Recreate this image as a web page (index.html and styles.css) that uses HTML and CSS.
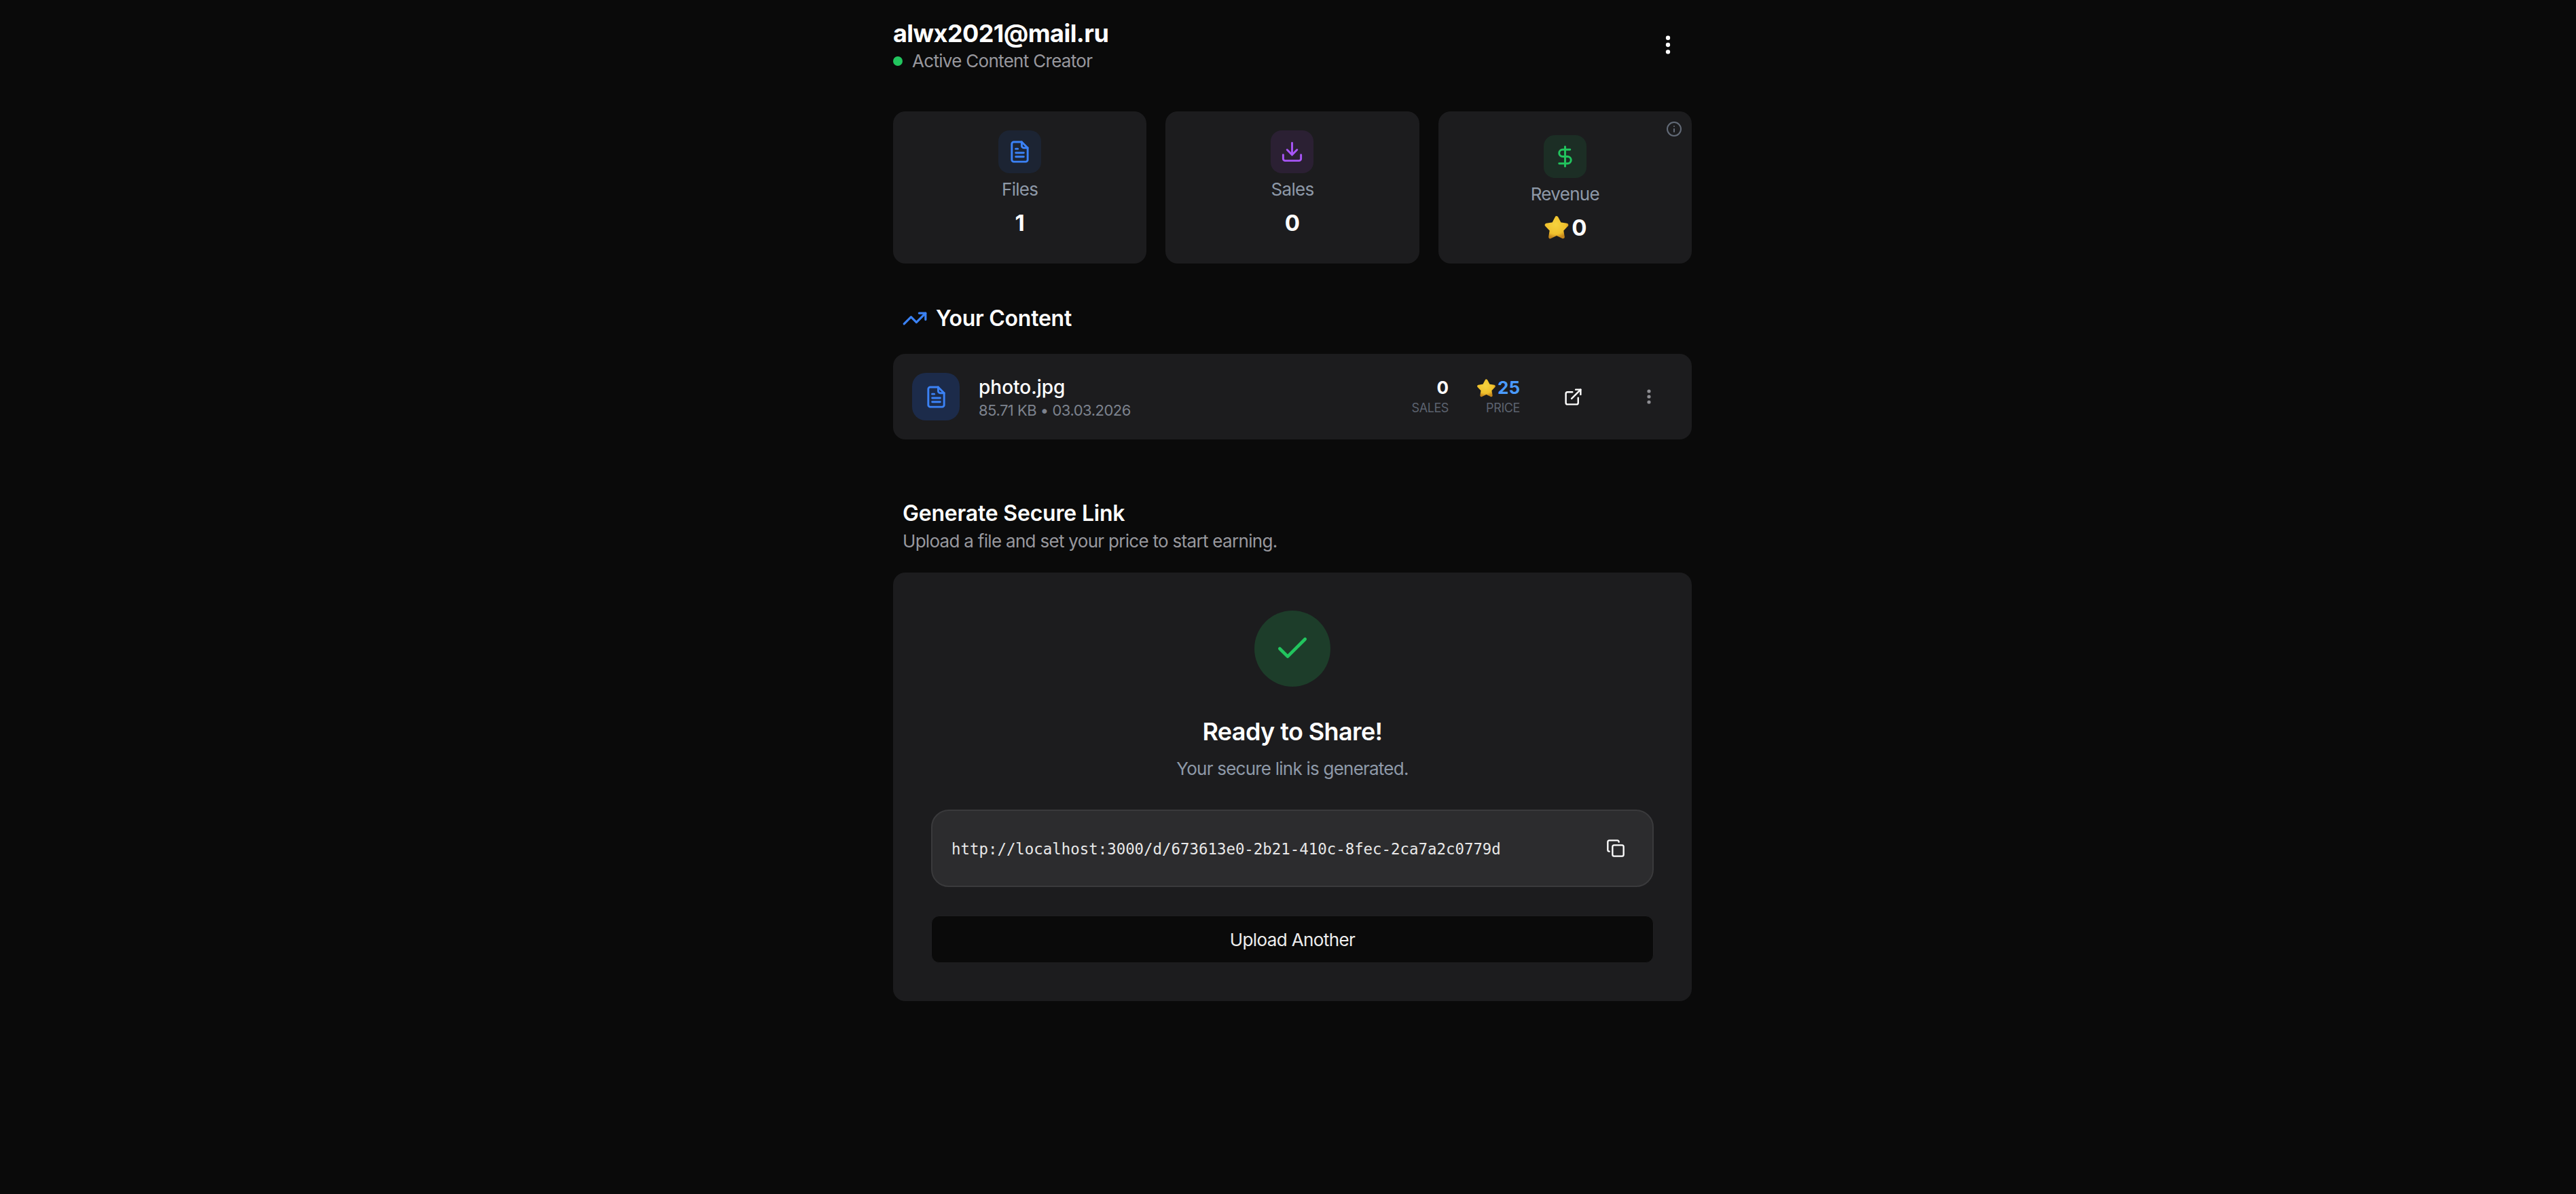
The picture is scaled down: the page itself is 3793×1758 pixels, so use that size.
FILE: index.html
```html
<!DOCTYPE html>
<html lang="en">
<head>
  <meta charset="UTF-8" />
  <title>Dashboard</title>
  <link rel="stylesheet" href="styles.css">
</head>
<body>
  <svg class="defs" width="0" height="0">
    <defs>
      <radialGradient id="gold" cx="45%" cy="35%" r="70%">
        <stop offset="0%" stop-color="#f6d33f"/>
        <stop offset="72%" stop-color="#efc02c"/>
        <stop offset="100%" stop-color="#c4861c"/>
      </radialGradient>
      <symbol id="star" viewBox="0 0 24 24">
        <path d="M12 3.400l2.900 5.500 6 .9-4.300 4.500 1 6-5.600-2.700-5.600 2.700 1-6-4.300-4.500 6-.9z" fill="url(#gold)" stroke="url(#gold)" stroke-width="3" stroke-linejoin="round"/>
      </symbol>
      <symbol id="file" viewBox="0 0 24 24">
        <path d="M14 2H6a2 2 0 0 0-2 2v16a2 2 0 0 0 2 2h12a2 2 0 0 0 2-2V8z"/>
        <path d="M14 2v4a2 2 0 0 0 2 2h4"/>
        <path d="M10 9H8"/><path d="M16 13H8"/><path d="M16 17H8"/>
      </symbol>
    </defs>
  </svg>

  <main class="page">
    <header class="top">
      <div>
        <h1 class="email">alwx2021@mail.ru</h1>
        <div class="status"><span class="dot"></span>Active Content Creator</div>
      </div>
      <svg class="kebab" viewBox="0 0 24 24" fill="currentColor">
        <circle cx="12" cy="5.500" r="2"/><circle cx="12" cy="12" r="2"/><circle cx="12" cy="18.500" r="2"/>
      </svg>
    </header>

    <section class="stats">
      <div class="stat">
        <div class="stat-icon blue"><svg class="ico"><use href="#file"/></svg></div>
        <div class="stat-label">Files</div>
        <div class="stat-value">1</div>
      </div>
      <div class="stat">
        <div class="stat-icon purple">
          <svg class="ico" viewBox="0 0 24 24"><path d="M21 15v4a2 2 0 0 1-2 2H5a2 2 0 0 1-2-2v-4"/><path d="M7 10l5 5 5-5"/><path d="M12 15V3"/></svg>
        </div>
        <div class="stat-label">Sales</div>
        <div class="stat-value">0</div>
      </div>
      <div class="stat stat-revenue">
        <svg class="info" viewBox="0 0 24 24"><circle cx="12" cy="12" r="10"/><path d="M12 16v-4"/><path d="M12 8h.01"/></svg>
        <div class="stat-icon green">
          <svg class="ico" viewBox="0 0 24 24"><path d="M12 2v20"/><path d="M17 5H9.500a3.500 3.500 0 0 0 0 7h5a3.500 3.500 0 0 1 0 7H6"/></svg>
        </div>
        <div class="stat-label">Revenue</div>
        <div class="stat-value with-star"><svg class="star-lg"><use href="#star"/></svg>0</div>
      </div>
    </section>

    <h2 class="content-title">
      <svg class="trend" viewBox="0 0 24 24"><path d="M22 7l-8.500 8.500-5-5L2 17"/><path d="M16 7h6v6"/></svg>
      Your Content
    </h2>

    <div class="file-row">
      <div class="file-icon"><svg class="ico"><use href="#file"/></svg></div>
      <div class="file-info">
        <div class="file-name">photo.jpg</div>
        <div class="file-meta">85.71 KB • 03.03.2026</div>
      </div>
      <div class="file-stat">
        <div class="num">0</div>
        <div class="cap">Sales</div>
      </div>
      <div class="file-stat price-col">
        <div class="num price"><svg class="star-sm"><use href="#star"/></svg>25</div>
        <div class="cap">Price</div>
      </div>
      <svg class="open" viewBox="0 0 24 24"><path d="M18 13v6a2 2 0 0 1-2 2H5a2 2 0 0 1-2-2V8a2 2 0 0 1 2-2h6"/><path d="M15 3h6v6"/><path d="M10 14L21 3"/></svg>
      <svg class="kebab-sm" viewBox="0 0 24 24" fill="currentColor">
        <circle cx="12" cy="4" r="2.600"/><circle cx="12" cy="12" r="2.600"/><circle cx="12" cy="20" r="2.600"/>
      </svg>
    </div>

    <div class="gen-head">
      <h2 class="gen-title">Generate Secure Link</h2>
      <p class="gen-sub">Upload a file and set your price to start earning.</p>
    </div>

    <section class="share">
      <div class="check"><svg viewBox="0 0 24 24"><path d="M20 6L9 17l-5-5"/></svg></div>
      <h3 class="share-title">Ready to Share!</h3>
      <p class="share-sub">Your secure link is generated.</p>
      <div class="link-box">
        <code class="link">http://localhost:3000/d/673613e0-2b21-410c-8fec-2ca7a2c0779d</code>
        <svg class="copy" viewBox="0 0 24 24"><rect x="8" y="8" width="14" height="14" rx="2"/><path d="M4 16c-1.100 0-2-.9-2-2V4c0-1.100.9-2 2-2h10c1.100 0 2 .9 2 2"/></svg>
      </div>
      <button class="again">Upload Another</button>
    </section>
  </main>
</body>
</html>
```

FILE: styles.css
```css
body {
  margin: 0;
  padding-left: 13px;
  min-height: 100vh;
  background: #0a0a0a;
  color: #fff;
  font-family: Inter, "Liberation Sans", sans-serif;
}

.defs {
  position: absolute;
}

.page {
  width: 1176px;
  margin: 0 auto;
}

/* header */
.top {
  display: flex;
  justify-content: space-between;
  align-items: center;
  padding-top: 22px;
  height: 88px;
}

.email {
  margin: 0;
  font-size: 36px;
  line-height: 44px;
  font-weight: 700;
  letter-spacing: -0.56px;
}

.status {
  display: flex;
  align-items: center;
  gap: 14px;
  margin-top: 3px;
  font-size: 26px;
  line-height: 32px;
  letter-spacing: -0.7px;
  color: #98989e;
}

.dot {
  width: 14px;
  height: 14px;
  border-radius: 50%;
  background: #22c55e;
}

.kebab {
  width: 38px;
  height: 38px;
  margin-right: 16px;
}

/* stat cards */
.stats {
  display: grid;
  grid-template-columns: repeat(3, 1fr);
  gap: 28px;
  margin-top: 54px;
}

.stat {
  position: relative;
  height: 224px;
  padding-top: 28px;
  box-sizing: border-box;
  background: #1c1c1e;
  border-radius: 18px;
  display: flex;
  flex-direction: column;
  align-items: center;
}

.stat-revenue {
  padding-top: 35px;
}

.stat-icon {
  width: 63px;
  height: 63px;
  border-radius: 16px;
  display: flex;
  align-items: center;
  justify-content: center;
}

.blue { background: #1c2433; color: #3b82f6; }
.purple { background: #2b2033; color: #a855f7; }
.green { background: #1c2e25; color: #22c55e; }

.ico {
  width: 35px;
  height: 35px;
  fill: none;
  stroke: currentColor;
  stroke-width: 2;
  stroke-linecap: round;
  stroke-linejoin: round;
}

.stat-label {
  margin-top: 8px;
  font-size: 26px;
  line-height: 32px;
  letter-spacing: -0.7px;
  color: #8e99a8;
}

.stat-value {
  margin-top: 13px;
  font-size: 33px;
  line-height: 40px;
  font-weight: 700;
}

.with-star {
  display: flex;
  align-items: center;
  gap: 2px;
}

.star-lg {
  width: 40px;
  height: 40px;
}

.info {
  position: absolute;
  top: 14px;
  right: 14px;
  width: 24px;
  height: 24px;
  fill: none;
  stroke: #636b78;
  stroke-width: 2;
  stroke-linecap: round;
  stroke-linejoin: round;
}

/* content list */
.content-title {
  display: flex;
  align-items: center;
  gap: 12px;
  margin: 61px 0 0;
  padding-left: 13px;
  font-size: 32px;
  line-height: 40px;
  font-weight: 600;
  letter-spacing: -0.25px;
}

.trend {
  width: 38px;
  height: 38px;
  fill: none;
  stroke: #3b82f6;
  stroke-width: 2;
  stroke-linecap: round;
  stroke-linejoin: round;
}

.file-row {
  display: flex;
  align-items: center;
  height: 126px;
  margin-top: 32px;
  padding: 0 28px;
  background: #1c1c1e;
  border-radius: 18px;
}

.file-icon {
  width: 70px;
  height: 70px;
  border-radius: 20px;
  background: #1c2b4a;
  color: #3b82f6;
  display: flex;
  align-items: center;
  justify-content: center;
  flex: none;
}

.file-info {
  flex: 1;
  margin-left: 28px;
  padding-top: 4px;
}

.file-name {
  font-size: 28px;
  line-height: 34px;
  font-weight: 500;
}

.file-meta {
  margin-top: 2px;
  font-size: 22px;
  line-height: 30px;
  letter-spacing: -0.5px;
  color: #7d838e;
}

.file-stat {
  text-align: right;
}

.price-col {
  margin-left: 40px;
}

.num {
  font-size: 26px;
  line-height: 32px;
  font-weight: 700;
}

.price {
  display: flex;
  align-items: center;
  justify-content: flex-end;
  gap: 1px;
  color: #4a9bff;
}

.star-sm {
  width: 31px;
  height: 31px;
}

.cap {
  margin-top: 2px;
  font-size: 18px;
  line-height: 24px;
  letter-spacing: -0.4px;
  color: #5c6370;
  text-transform: uppercase;
}

.open {
  width: 29px;
  height: 29px;
  margin-left: 64px;
  fill: none;
  stroke: #fff;
  stroke-width: 2;
  stroke-linecap: round;
  stroke-linejoin: round;
}

.kebab-sm {
  width: 24px;
  height: 24px;
  margin-left: 85px;
  margin-right: 23px;
  color: #8e8e93;
}

/* generate */
.gen-head {
  margin-top: 89px;
  padding-left: 14px;
}

.gen-title {
  margin: 0;
  font-size: 32px;
  line-height: 40px;
  font-weight: 600;
  letter-spacing: -0.2px;
}

.gen-sub {
  margin: 5px 0 0;
  font-size: 26px;
  line-height: 32px;
  letter-spacing: -0.7px;
  color: #98989e;
}

.share {
  display: flex;
  flex-direction: column;
  align-items: center;
  height: 631px;
  margin-top: 30px;
  padding: 56px 56px 0;
  box-sizing: border-box;
  background: #1c1c1e;
  border-radius: 18px;
}

.check {
  width: 112px;
  height: 112px;
  border-radius: 50%;
  background: #1d3d2a;
  display: flex;
  align-items: center;
  justify-content: center;
}

.check svg {
  width: 56px;
  height: 56px;
  fill: none;
  stroke: #22c55e;
  stroke-width: 2;
  stroke-linecap: round;
  stroke-linejoin: round;
}

.share-title {
  margin: 44px 0 0;
  font-size: 36px;
  line-height: 44px;
  font-weight: 600;
  letter-spacing: -0.6px;
}

.share-sub {
  margin: 16px 0 0;
  font-size: 26px;
  line-height: 34px;
  letter-spacing: -0.77px;
  color: #8e99a8;
}

.link-box {
  display: flex;
  align-items: center;
  justify-content: space-between;
  width: 100%;
  height: 114px;
  margin-top: 43px;
  padding: 0 28px;
  box-sizing: border-box;
  background: #2c2c2e;
  border: 2px solid #3a3a3c;
  border-radius: 26px;
}

.link {
  padding-top: 2px;
  font-family: "DejaVu Sans Mono", monospace;
  font-size: 22.4px;
  color: #e8e8e8;
}

.copy {
  width: 28px;
  height: 28px;
  margin-right: 12px;
  fill: none;
  stroke: #fff;
  stroke-width: 2;
  stroke-linecap: round;
  stroke-linejoin: round;
}

.again {
  width: 100%;
  height: 70px;
  margin-top: 42px;
  background: #0a0a0a;
  border: 1px solid #1f1f21;
  border-radius: 12px;
  color: #eee;
  font-family: inherit;
  font-size: 26px;
  font-weight: 400;
  letter-spacing: -0.6px;
}
```
